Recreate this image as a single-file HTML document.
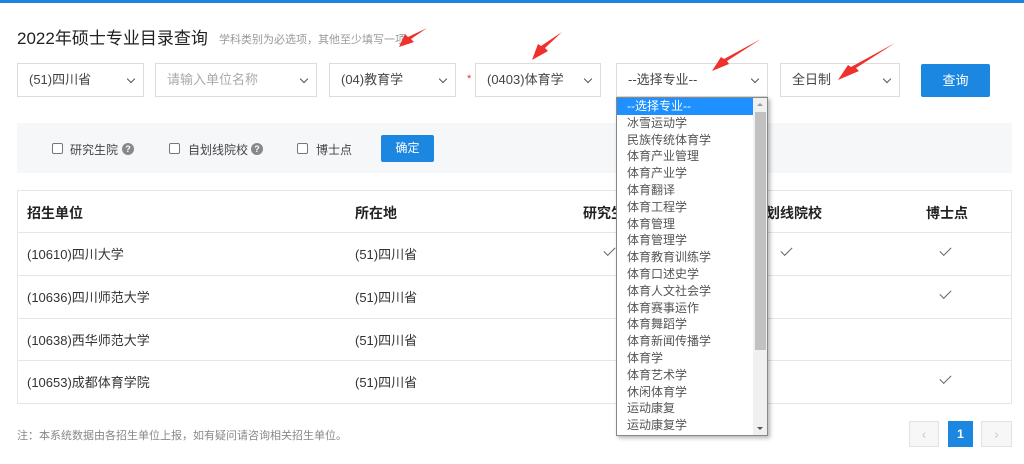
<!DOCTYPE html>
<html><head><meta charset="utf-8"><style>
*{box-sizing:border-box;margin:0;padding:0}
body{width:1024px;height:464px;overflow:hidden;background:#fff;font-family:"Liberation Sans","Noto Sans CJK SC",sans-serif;color:#333;position:relative}
.a{position:absolute}
.top{left:0;top:0;width:1024px;height:3px;background:#1a86dd}
.sel{border:1px solid #dcdcdc;height:34px;top:63px;font-size:13px;line-height:32px;padding-left:11px;color:#444;background:#fff}
.sel:after{content:"";position:absolute;right:9px;top:12px;width:5px;height:5px;border-right:1.5px solid #555;border-bottom:1.5px solid #555;transform:rotate(45deg)}
.btn{background:#1b87e0;color:#fff;text-align:center;font-size:13px}
.cb{width:11px;height:11px;border:1px solid #777;border-radius:2px;top:143px;background:#fff}
.lb{font-size:12px;top:141px;color:#444}
.q{width:12px;height:12px;border-radius:50%;background:#888;color:#fff;font-size:9px;line-height:12px;text-align:center;top:143px;font-weight:bold}
.tbl{left:17px;top:190px;width:995px;height:214px;border:1px solid #e6e6e6}
.row{left:17px;width:995px;height:1px;background:#e6e6e6}
.th{font-size:14px;font-weight:bold;top:203px;color:#222}
.td{font-size:13px;color:#333}
.ck{width:11px;height:6px;border-left:1.3px solid #666;border-bottom:1.3px solid #666;transform:rotate(-45deg)}
.dd{left:616px;top:97px;width:152px;height:339px;border:1px solid #888;background:#fff;box-shadow:2px 2px 4px rgba(0,0,0,.3);font-size:12px;color:#555}
.dd div{height:16.8px;line-height:16.8px;padding-left:10px;white-space:nowrap}
</style></head><body>
<div class="a top"></div>
<div class="a" style="left:17px;top:24px;font-size:17px;color:#222;white-space:nowrap">2022年硕士专业目录查询</div>
<div class="a" style="left:219px;top:31px;font-size:11px;color:#999;white-space:nowrap">学科类别为必选项，其他至少填写一项。</div>
<div class="a sel" style="left:17px;width:127px">(51)四川省</div>
<div class="a sel" style="left:155px;width:162px;color:#aaa">请输入单位名称</div>
<div class="a sel" style="left:329px;width:127px">(04)教育学</div>
<div class="a" style="left:467px;top:73px;color:#e33;font-size:11px">*</div>
<div class="a sel" style="left:475px;width:126px">(0403)体育学</div>
<div class="a sel" style="left:616px;width:152px">--选择专业--</div>
<div class="a sel" style="left:780px;width:120px">全日制</div>
<div class="a btn" style="left:921px;top:64px;width:69px;height:33px;line-height:33px;border-radius:2px">查询</div>
<svg class="a" style="left:0;top:0" width="1024" height="100">
<g fill="#f0302c">
<polygon points="427,28 411,39 414,42 399,47 405,34 408,37"/>
<polygon points="562,32 545,48 548,51 532,60 538,44 541,46"/>
<polygon points="761,39 727,61 729,64 712,71 721,57 724,59"/>
<polygon points="895,43 856,68 859,71 838,80 848,65 851,67"/>
</g></svg>
<div class="a" style="left:17px;top:123px;width:995px;height:50px;background:#f6f7f9"></div>
<div class="a cb" style="left:52px"></div><div class="a lb" style="left:70px">研究生院</div><div class="a q" style="left:122px">?</div>
<div class="a cb" style="left:169px"></div><div class="a lb" style="left:188px">自划线院校</div><div class="a q" style="left:251px">?</div>
<div class="a cb" style="left:297px"></div><div class="a lb" style="left:316px">博士点</div>
<div class="a btn" style="left:381px;top:135px;width:53px;height:27px;line-height:27px;border-radius:2px;font-size:12px">确定</div>
<div class="a tbl"></div>
<div class="a row" style="top:232px"></div><div class="a row" style="top:275px"></div><div class="a row" style="top:318px"></div><div class="a row" style="top:360px"></div>
<div class="a th" style="left:27px">招生单位</div><div class="a th" style="left:355px">所在地</div><div class="a th" style="left:583px">研究生院</div><div class="a th" style="left:752px">自划线院校</div><div class="a th" style="left:926px">博士点</div>
<div class="a td" style="left:27px;top:244px">(10610)四川大学</div><div class="a td" style="left:355px;top:244px">(51)四川省</div>
<div class="a td" style="left:27px;top:287px">(10636)四川师范大学</div><div class="a td" style="left:355px;top:287px">(51)四川省</div>
<div class="a td" style="left:27px;top:330px">(10638)西华师范大学</div><div class="a td" style="left:355px;top:330px">(51)四川省</div>
<div class="a td" style="left:27px;top:372px">(10653)成都体育学院</div><div class="a td" style="left:355px;top:372px">(51)四川省</div>
<div class="a ck" style="left:604px;top:247px"></div><div class="a ck" style="left:781px;top:247px"></div>
<div class="a ck" style="left:940px;top:247px"></div><div class="a ck" style="left:940px;top:290px"></div><div class="a ck" style="left:940px;top:375px"></div>
<div class="a" style="left:17px;top:427px;font-size:11px;color:#888;white-space:nowrap">注：本系统数据由各招生单位上报，如有疑问请咨询相关招生单位。</div>
<div class="a" style="left:909px;top:421px;width:30px;height:26px;border:1px solid #e2e2e2;background:#f7f7f7;color:#ccc;text-align:center;line-height:24px;font-size:14px">&lsaquo;</div>
<div class="a btn" style="left:948px;top:421px;width:25px;height:26px;line-height:26px;font-size:12px;font-weight:bold">1</div>
<div class="a" style="left:981px;top:421px;width:31px;height:26px;border:1px solid #e2e2e2;background:#f7f7f7;color:#ccc;text-align:center;line-height:24px;font-size:14px">&rsaquo;</div>
<div class="a dd">
<div style="background:#1e90ff;color:#fff;width:136px">--选择专业--</div>
<div>冰雪运动学</div><div>民族传统体育学</div><div>体育产业管理</div><div>体育产业学</div><div>体育翻译</div><div>体育工程学</div><div>体育管理</div><div>体育管理学</div><div>体育教育训练学</div><div>体育口述史学</div><div>体育人文社会学</div><div>体育赛事运作</div><div>体育舞蹈学</div><div>体育新闻传播学</div><div>体育学</div><div>体育艺术学</div><div>休闲体育学</div><div>运动康复</div><div>运动康复学</div>
<span class="a" style="left:136px;top:0;width:14px;height:337px;background:#f0f0f0"></span>
<span class="a" style="left:138px;top:14px;width:11px;height:238px;background:#c1c1c1"></span>
<span class="a" style="left:140px;top:5px;border:3px solid transparent;border-bottom-color:#999;border-top:0"></span>
<span class="a" style="left:140px;top:329px;border:3px solid transparent;border-top-color:#555;border-bottom:0"></span>
</div>
</body></html>
